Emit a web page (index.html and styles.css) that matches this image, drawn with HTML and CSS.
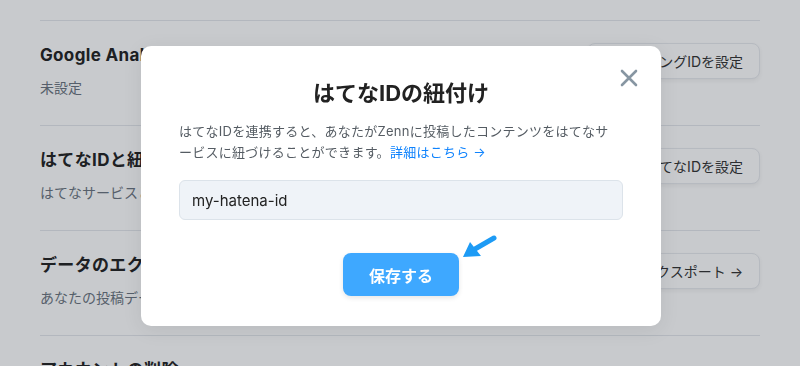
FILE: index.html
```html
<!DOCTYPE html>
<html lang="ja">
<head>
    <meta charset="UTF-8">
    <meta name="viewport" content="width=device-width, initial-scale=1.0">
    <title>アカウント設定</title>
    <link rel="stylesheet" href="styles.css">
</head>
<body>

    <main class="settings">
        <!-- Google Analytics -->
        <section class="setting-row">
            <div class="setting-text">
                <h3 class="setting-title">Google Analytics</h3>
                <p class="setting-desc">未設定</p>
            </div>
            <button class="setting-button">トラッキングIDを設定</button>
        </section>

        <!-- Hatena -->
        <section class="setting-row">
            <div class="setting-text">
                <h3 class="setting-title">はてなIDと紐付け</h3>
                <p class="setting-desc">はてなサービスと連携できます</p>
            </div>
            <button class="setting-button">はてなIDを設定</button>
        </section>

        <!-- Export -->
        <section class="setting-row">
            <div class="setting-text">
                <h3 class="setting-title">データのエクスポート</h3>
                <p class="setting-desc">あなたの投稿データをダウンロードできます</p>
            </div>
            <button class="setting-button">エクスポート →</button>
        </section>

        <!-- Delete -->
        <section class="setting-row">
            <div class="setting-text">
                <h3 class="setting-title">アカウントの削除</h3>
                <p class="setting-desc">アカウントを削除します</p>
            </div>
        </section>
    </main>

    <!-- Modal -->
    <div class="overlay">
        <div class="modal">
            <button class="modal-close" aria-label="閉じる">
                <svg width="18" height="18" viewBox="0 0 18 18">
                    <path d="M2 2 L16 16 M16 2 L2 16" stroke="currentColor" stroke-width="2.6" stroke-linecap="round"/>
                </svg>
            </button>
            <h2 class="modal-title">はてなIDの紐付け</h2>
            <p class="modal-desc">はてなIDを連携すると、あなたがZennに投稿したコンテンツをはてなサ<br>ービスに紐づけることができます。<a href="#">詳細はこちら →</a></p>
            <input class="modal-input" type="text" value="my-hatena-id">
            <div class="modal-actions">
                <button class="save-button">保存する</button>
                <!-- annotation arrow -->
                <svg class="hint-arrow" width="40" height="30" viewBox="0 0 40 30">
                    <path d="M34 5 L15 16" stroke="#1d9bf5" stroke-width="5" stroke-linecap="round"/>
                    <polygon points="3,24 10,9 21,23" fill="#1d9bf5"/>
                </svg>
            </div>
        </div>
    </div>

</body>
</html>
```

FILE: styles.css
```css
body {
    font-family: "Inter", "Noto Sans CJK JP", sans-serif;
    margin: 0;
    padding: 0;
    background: #fff;
    color: #222;
}
.settings {
    margin: 0 40px;
    padding-top: 20px;
}
.setting-row {
    display: flex;
    justify-content: space-between;
    align-items: flex-start;
    border-top: 1px solid #e4e7ec;
    padding: 22px 0 27px;
}
.setting-title {
    margin: 0;
    font-size: 17px;
    line-height: 24px;
    font-weight: 700;
    letter-spacing: 0.02em;
}
.setting-desc {
    margin: 11px 0 0;
    font-size: 14px;
    line-height: 20px;
    color: #6b7480;
}
.setting-button {
    font-family: inherit;
    font-size: 14px;
    height: 36px;
    padding: 0 16px;
    background: #fff;
    color: #333;
    border: 1px solid #e8eaee;
    border-radius: 8px;
    box-shadow: 0 2px 4px rgba(0, 0, 0, 0.06);
}
.overlay {
    position: fixed;
    inset: 0;
    background: rgba(17, 24, 39, 0.23);
    display: flex;
    align-items: center;
    justify-content: center;
}
.modal {
    position: relative;
    width: 444px;
    padding: 31px 38px 30px;
    margin: 6px 0 0 2px;
    background: #fff;
    border-radius: 10px;
    box-shadow: 0 4px 20px rgba(0, 0, 0, 0.08);
}
.modal-close {
    position: absolute;
    top: 23px;
    right: 23px;
    padding: 0;
    border: none;
    background: none;
    color: #8796a2;
    display: flex;
}
.modal-title {
    margin: 0;
    text-align: center;
    font-size: 22px;
    line-height: 32px;
    font-weight: 700;
    color: #222;
}
.modal-desc {
    margin: 12px 0 0;
    font-size: 13px;
    line-height: 21px;
    letter-spacing: 0.02em;
    color: #555c63;
}
.modal-desc a {
    color: #0f83fd;
    text-decoration: none;
}
.modal-input {
    display: block;
    box-sizing: border-box;
    width: 100%;
    height: 40px;
    margin-top: 17px;
    padding: 0 12px;
    font-family: inherit;
    font-size: 15px;
    color: #222;
    background: #eff3f8;
    border: 1px solid #dce3ea;
    border-radius: 6px;
}
.modal-actions {
    position: relative;
    display: flex;
    justify-content: center;
    margin-top: 33px;
}
.save-button {
    font-family: inherit;
    font-size: 16px;
    font-weight: 700;
    height: 43px;
    padding: 0 26px;
    color: #fff;
    background: #3ea8ff;
    border: none;
    border-radius: 8px;
    box-shadow: 0 2px 5px rgba(0, 0, 0, 0.1);
}
.hint-arrow {
    position: absolute;
    left: 281px;
    top: -20px;
}
```
